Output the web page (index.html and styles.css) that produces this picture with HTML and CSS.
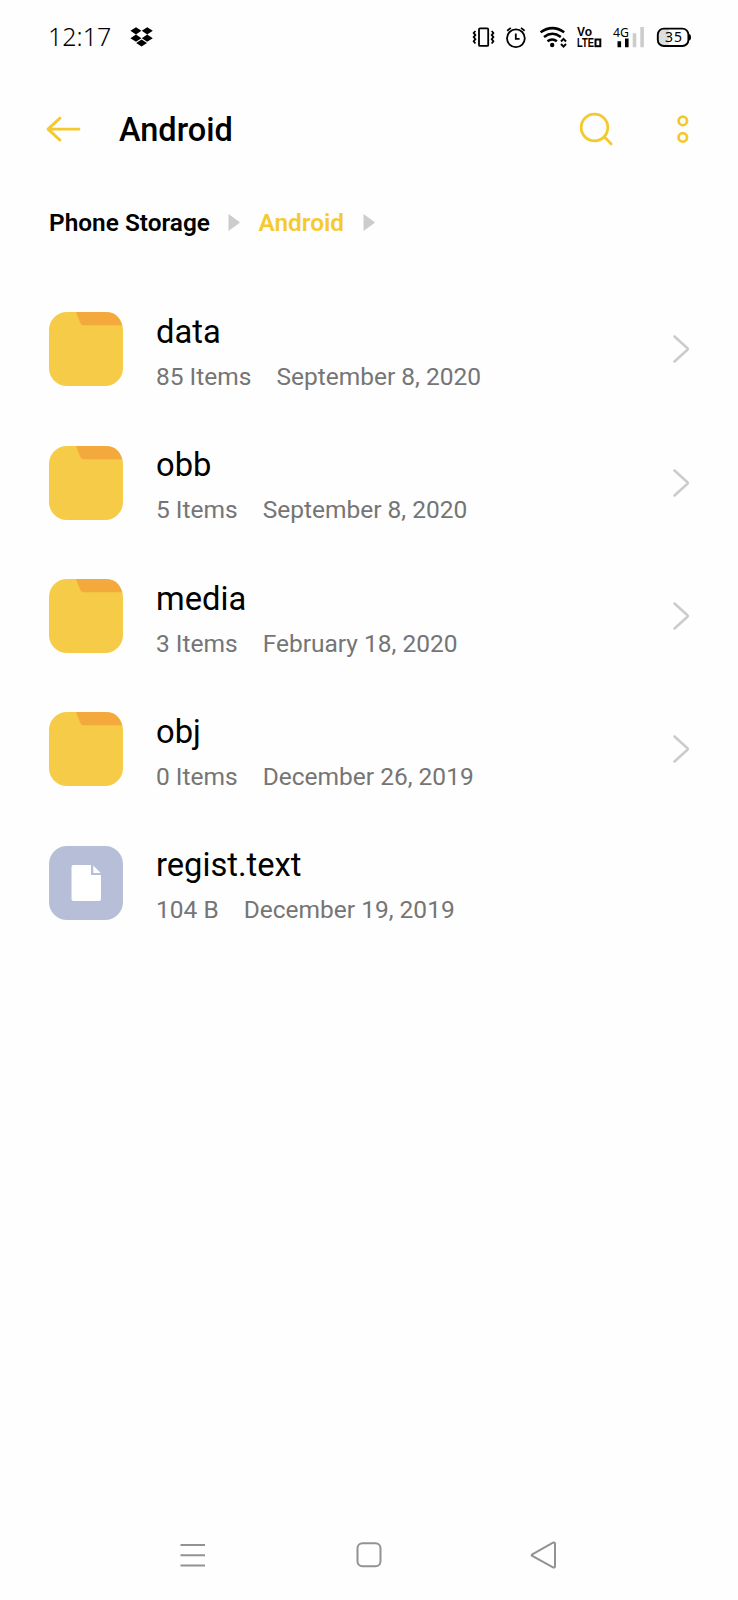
FILE: index.html
```html
<!DOCTYPE html>
<html lang="en">
<head>
<meta charset="utf-8">
<title>Android</title>
<link rel="stylesheet" href="styles.css">
</head>
<body>
<div class="screen">
  <div class="status">
    <span class="clock">12:17</span>
    <svg class="dropbox" width="24" height="20" viewBox="130 27 24 20"><path d="M136 27.2l5.400 3.600-5.400 3.600-5.600-3.600zM147.200 27.200l5.600 3.600-5.600 3.600-5.400-3.600zM136 34.600l5.400 3.600-5.400 3.600-5.600-3.600zM147.200 34.600l5.600 3.600-5.600 3.600-5.400-3.600zM141.600 39.400l5.400 3.500-5.400 3.500-5.400-3.500z"/></svg>
    <div class="indicators">
      <svg width="30" height="30" viewBox="470 22 30 30" fill="none" stroke="#000" stroke-width="1.800"><rect x="479" y="28.300" width="9.200" height="17.600" rx="1"/><path d="M475.400 31l-1.700 2 1.700 2.100-1.700 2 1.700 2.100-1.700 2 1.700 2.400M491.700 31l1.700 2-1.700 2.100 1.700 2-1.700 2.100 1.700 2-1.700 2.400"/></svg>
      <svg width="35" height="30" viewBox="500 22 35 30" fill="none" stroke="#000" stroke-width="1.800"><circle cx="515.900" cy="38.300" r="8.900"/><path d="M515.800 33.500v5.300h3.800M507.200 30.800l3.600-2.900M524.600 30.800l-3.600-2.900"/></svg>
      <svg width="37" height="30" viewBox="535 22 37 30" fill="none" stroke="#000" stroke-width="2.500"><path d="M540.600 32.300q11.800-8.400 23.600 0M544 37q8.400-6.400 16.800 0M547.500 41.300q4.700-3.600 9.400 0"/><circle cx="552.200" cy="45" r="2.200" fill="#000" stroke="none"/><path stroke-width="2" d="M561 41.500l2.500-2.600 2.500 2.600M561 44l2.500 2.600 2.500-2.600"/></svg>
      <svg width="36" height="30" viewBox="572 22 36 30"><text class="badge" x="577" y="36.200" textLength="15">Vo</text><text class="badge" x="577" y="47.200" textLength="17" lengthAdjust="spacingAndGlyphs">LTE</text><rect x="595.500" y="39.500" width="4.800" height="6.700" fill="none" stroke="#000" stroke-width="2"/></svg>
      <svg width="42" height="30" viewBox="608 22 42 30"><text class="network" x="613" y="37" textLength="16" lengthAdjust="spacingAndGlyphs">4G</text><path d="M617.500 41.300h3.600v5.900h-3.600zM625 38.500h3.600v8.700H625z"/><path fill="#ccc" d="M632.700 33.300h3.600v13.900h-3.600zM640.300 27h3.600v20.200h-3.600z"/></svg>
      <svg width="45" height="30" viewBox="650 22 45 30"><path fill="#ddd" d="M669 29h-5a6 6 0 0 0-6 6v5a6 6 0 0 0 6 6h5z"/><rect x="657.800" y="28.600" width="30.600" height="17.400" rx="6" fill="none" stroke="#000" stroke-width="1.900"/><path d="M689 34q2 .2 2 3.300t-2 3.300z"/><text class="level" x="665" y="42.200" textLength="17">35</text></svg>
    </div>
  </div>

  <header class="bar">
    <svg class="back" width="36" height="30" viewBox="46 114 36 30"><path d="M60 118.100l-12 11 12 11M48 129.100h31"/></svg>
    <h1 class="title">Android</h1>
    <svg class="search" width="36" height="36" viewBox="578 111 36 36"><circle cx="594.500" cy="127.500" r="13.300"/><path d="M604.500 137l6.600 6.900"/></svg>
    <svg class="more" width="14" height="30" viewBox="675.500 114 14 30"><circle cx="682.300" cy="120.900" r="4.200"/><circle cx="682.300" cy="137.400" r="4.200"/></svg>
  </header>

  <nav class="crumbs">
    <span class="crumb">Phone Storage</span>
    <svg class="sep" width="12" height="18" viewBox="0 0 12 18"><path d="M.5 0v17L11.500 9V8z"/></svg>
    <span class="crumb current">Android</span>
    <svg class="sep" width="12" height="18" viewBox="0 0 12 18"><path d="M.5 0v17L11.500 9V8z"/></svg>
  </nav>

  <main class="list">
    <div class="row">
      <svg class="icon" viewBox="0 0 74 74"><use href="#folder"/></svg>
      <div class="info"><div class="name">data</div><div class="meta"><span>85 Items</span><span>September 8, 2020</span></div></div>
      <svg class="chevron" viewBox="0 0 18 30"><use href="#chevron"/></svg>
    </div>
    <div class="row">
      <svg class="icon" viewBox="0 0 74 74"><use href="#folder"/></svg>
      <div class="info"><div class="name">obb</div><div class="meta"><span>5 Items</span><span>September 8, 2020</span></div></div>
      <svg class="chevron" viewBox="0 0 18 30"><use href="#chevron"/></svg>
    </div>
    <div class="row">
      <svg class="icon" viewBox="0 0 74 74"><use href="#folder"/></svg>
      <div class="info"><div class="name">media</div><div class="meta"><span>3 Items</span><span>February 18, 2020</span></div></div>
      <svg class="chevron" viewBox="0 0 18 30"><use href="#chevron"/></svg>
    </div>
    <div class="row">
      <svg class="icon" viewBox="0 0 74 74"><use href="#folder"/></svg>
      <div class="info"><div class="name">obj</div><div class="meta"><span>0 Items</span><span>December 26, 2019</span></div></div>
      <svg class="chevron" viewBox="0 0 18 30"><use href="#chevron"/></svg>
    </div>
    <div class="row">
      <svg class="icon" viewBox="0 0 74 74"><rect width="74" height="74" rx="18" fill="#b7bfd8"/><path fill="#fff" d="M24.500 19H42v10h10v24a2 2 0 0 1-2 2H24.500a2 2 0 0 1-2-2V21a2 2 0 0 1 2-2zM44.300 19.500l7.400 7.500h-7.400z"/></svg>
      <div class="info"><div class="name">regist.text</div><div class="meta"><span>104 B</span><span>December 19, 2019</span></div></div>
    </div>
  </main>

  <footer class="nav">
    <svg width="28" height="30" viewBox="178 1540 28 30"><path d="M180.500 1545h24.500M180.500 1555.200h24.500M180.500 1565.500h24.500"/></svg>
    <svg width="28" height="30" viewBox="355 1540 28 30"><rect x="357.500" y="1543.200" width="23" height="23" rx="5"/></svg>
    <svg width="28" height="30" viewBox="530 1540 28 30"><path d="M532.300 1554.300L553 1542.700q2-.8 2 1.300v22q0 2.200-2 1.300L532.300 1556q-1.300-.9 0-1.700z"/></svg>
  </footer>
</div>

<svg class="defs" width="0" height="0">
  <defs>
    <g id="folder"><rect width="74" height="74" rx="18" fill="#f5cb47"/><path fill="#f3a93c" d="M27 0H56Q70 0 73 13.200H34Q32 13 31.300 11z"/></g>
    <path id="chevron" d="M2.500 2.500L15.200 14q1.200 1 0 2L2.500 27.500" fill="none" stroke="#ccc" stroke-width="2.600" stroke-linecap="round"/>
  </defs>
</svg>
</body>
</html>
```
FILE: styles.css
```css
* { box-sizing: border-box; }
body { margin: 0; background: #fefefe; font-family: Roboto, sans-serif; color: #000; }
svg { display: block; flex: none; }
.defs { display: none; }
.screen { width: 738px; height: 1600px; display: flex; flex-direction: column; }

.status { height: 74px; display: flex; align-items: center; padding: 0 43px 0 48px; }
.clock { width: 82px; font: 350 25px/34px "Noto Sans", sans-serif; margin-top: -2px; }
.indicators { display: flex; margin-left: auto; }
.badge { font: bold 12px "Liberation Sans", sans-serif; }
.network { font: 400 13px "Noto Sans", sans-serif; }
.level { font: 14px "Noto Sans", sans-serif; }

.bar { height: 110px; display: flex; align-items: center; padding: 0 48.500px 0 46px; }
.bar svg { fill: none; stroke: #f4c92f; stroke-width: 2.800; stroke-linecap: round; stroke-linejoin: round; }
.title { margin: 2px 0 0 37px; font-size: 32.500px; font-weight: 500; line-height: 40px; }
.search { margin-left: auto; }
.more { margin-left: 61.500px; }

.crumbs { height: 77px; display: flex; align-items: center; padding: 0 49px; margin-bottom: 21.800px; }
.crumb { font-size: 24.400px; font-weight: 600; line-height: 30px; }
.current { color: #f6ca2d; }
.sep { margin: 0 18px 0 18.500px; fill: #ccc; }

.list { flex: 1; }
.row { height: 133.300px; display: flex; align-items: center; padding: 0 48px 0 49px; }
.icon { width: 74px; height: 74px; }
.info { flex: 1; margin: 5px 0 0 33px; }
.name { font-size: 32.700px; line-height: 40px; height: 50px; }
.meta { display: flex; gap: 25px; font-size: 24.500px; line-height: 30px; color: #757575; }
.chevron { width: 18px; height: 30px; }

.nav { height: 90px; display: flex; padding: 30px 0 0 178px; }
.nav svg { fill: none; stroke: #929292; stroke-width: 2; }
.nav svg + svg { margin-left: 149px; }
.nav svg:last-child { margin-left: 147px; }
```
